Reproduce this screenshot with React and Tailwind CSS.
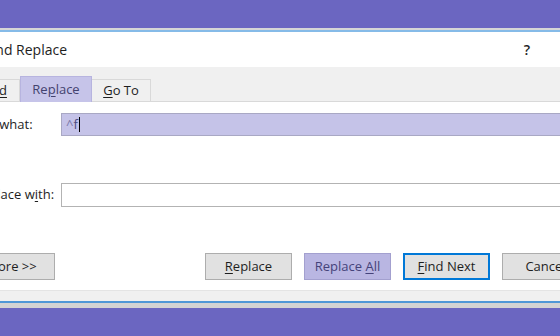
export default function App() {
  const btn =
    "w-[87px] h-[27px] border border-[#adadad] bg-[#e1e1e1] flex items-center justify-center text-[#1e1e1e]";
  return (
    <div className="w-[560px] h-[336px] overflow-hidden bg-[#6b66c1] font-['Open_Sans',sans-serif] text-[13px] text-[#1e1e1e]">
      <div className="h-[28px]" />
      <div className="ml-[-40px] w-[640px] flex flex-col">
        <div className="h-[2px] bg-[#d6d6d6]" />
        <div className="h-[2px] bg-[#86bbe8]" />
        <div className="h-[35px] bg-white flex items-center justify-between pr-[70px]">
          <span className="text-[14px] leading-none ml-[-4px]">Find and Replace</span>
          <span className="text-[14px] leading-none font-semibold">?</span>
        </div>
        <div className="h-[35px] bg-[#f0f0f0] border-b border-[#d9d9d9] flex items-end pl-[8px]">
          <div className="w-[52px] h-[22px] border border-b-0 border-[#d9d9d9] flex items-center justify-center">
            <span>
              Fin<u className="underline-offset-2">d</u>
            </span>
          </div>
          <div className="w-[72px] h-[26px] mb-[-1px] border border-b-0 border-[#b7b4df] bg-[#c6c4e9] flex items-center justify-center text-[#43426e]">
            <span>
              Re<u className="underline-offset-2">p</u>lace
            </span>
          </div>
          <div className="w-[59px] h-[22px] border border-b-0 border-l-0 border-[#d9d9d9] flex items-center justify-center">
            <span>
              <u className="underline-offset-2">G</u>o To
            </span>
          </div>
        </div>
        <div className="h-[188px] bg-white flex flex-col">
          <div className="mt-[11px] h-[23px] flex items-center">
            <div className="w-[101px] shrink-0 pl-[10px]">Find what:</div>
            <div className="flex-1 mr-[10px] h-full border border-[#a9a8c4] bg-[#c5c3e8] flex items-center pl-[4px] text-[#4d4c80]">
              <span className="text-[#7a79a8]">^</span>
              <span>f</span>
              <span className="inline-block w-px h-[15px] bg-black ml-px" />
            </div>
          </div>
          <div className="mt-[47px] h-[24px] flex items-center">
            <div className="w-[101px] shrink-0 pl-[14px]">
              Replace w<u className="underline-offset-2">i</u>th:
            </div>
            <div className="flex-1 mr-[10px] h-full border border-[#b3b3b3] bg-white" />
          </div>
          <div className="mt-[46px] h-[27px] flex justify-between pl-[8px] pr-[11px]">
            <div className={btn}>
              <span>
                <u className="underline-offset-2">M</u>ore &gt;&gt;
              </span>
            </div>
            <div className="flex gap-[12px]">
              <div className={btn}>
                <span>
                  <u className="underline-offset-2">R</u>eplace
                </span>
              </div>
              <div className="w-[87px] h-[27px] border border-[#a3a0cf] bg-[#b9b6e2] flex items-center justify-center text-[#45437a]">
                <span>
                  Replace <u className="underline-offset-2">A</u>ll
                </span>
              </div>
              <div className="w-[87px] h-[27px] border-2 border-[#0078d7] bg-[#e1e1e1] flex items-center justify-center text-[#1e1e1e]">
                <span>
                  <u className="underline-offset-2">F</u>ind Next
                </span>
              </div>
              <div className={btn}>
                <span>Cancel</span>
              </div>
            </div>
          </div>
        </div>
        <div className="h-[11px] bg-[#f0f0f0] border-t border-[#e4e4e4]" />
        <div className="h-[2px] bg-[#4f97d6]" />
        <div className="h-[5px] bg-[#d3d3d3]" />
      </div>
    </div>
  );
}
